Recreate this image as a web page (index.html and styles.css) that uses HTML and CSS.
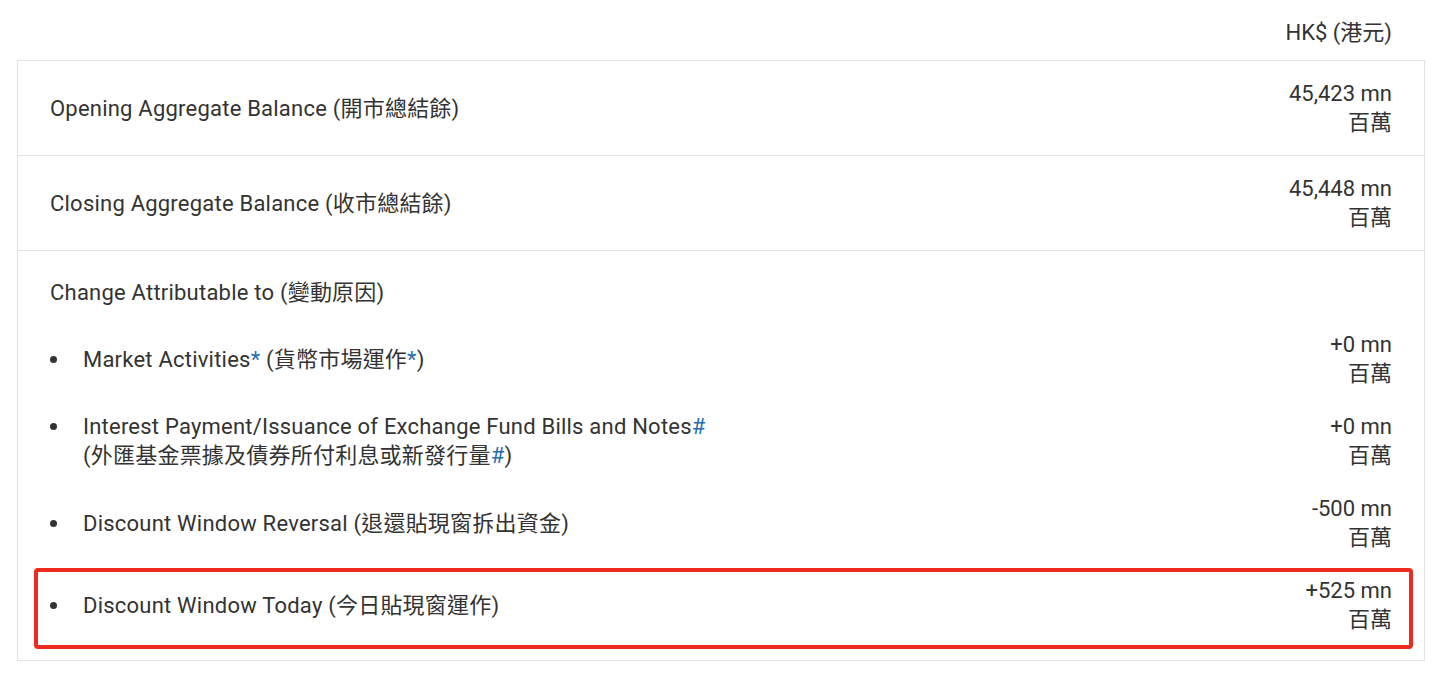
FILE: index.html
```html
<!DOCTYPE html>
<html lang="en">
<head>
<meta charset="utf-8">
<title>Aggregate Balance</title>
<link rel="stylesheet" href="styles.css">
</head>
<body>
<div class="page">
  <div class="unit">HK$ (港元)</div>
  <div class="table">
    <div class="row">
      <div class="label">Opening Aggregate Balance (開市總結餘)</div>
      <div class="value"><span>45,423 mn</span><span>百萬</span></div>
    </div>
    <div class="row">
      <div class="label">Closing Aggregate Balance (收市總結餘)</div>
      <div class="value"><span>45,448 mn</span><span>百萬</span></div>
    </div>
    <div class="row change">
      <div class="heading">Change Attributable to (變動原因)</div>
      <ul class="items">
        <li class="item">
          <div class="item-label">Market Activities<span class="mark">*</span> (貨幣市場運作<span class="mark">*</span>)</div>
          <div class="value"><span>+0 mn</span><span>百萬</span></div>
        </li>
        <li class="item">
          <div class="item-label">Interest Payment/Issuance of Exchange Fund Bills and Notes<span class="mark">#</span><br>(外匯基金票據及債券所付利息或新發行量<span class="mark">#</span>)</div>
          <div class="value"><span>+0 mn</span><span>百萬</span></div>
        </li>
        <li class="item">
          <div class="item-label">Discount Window Reversal (退還貼現窗拆出資金)</div>
          <div class="value"><span>-500 mn</span><span>百萬</span></div>
        </li>
        <li class="item highlight">
          <div class="item-label">Discount Window Today (今日貼現窗運作)</div>
          <div class="value"><span>+525 mn</span><span>百萬</span></div>
        </li>
      </ul>
    </div>
  </div>
</div>
</body>
</html>
```
FILE: styles.css
```css
* { box-sizing: border-box; }
html, body { margin: 0; padding: 0; background: #ffffff; }
body {
  font-family: Roboto, "Noto Sans CJK TC", sans-serif;
  font-size: 22px;
  line-height: 29px;
  color: #333333;
}
.page {
  padding: 0 12px 0 17px;
}
.unit {
  height: 60px;
  padding: 18px 33px 0 0;
  text-align: right;
}
.table {
  border: 1px solid #e2e2e2;
}
.row {
  display: flex;
  align-items: center;
  justify-content: space-between;
  padding: 18px 32px 18px 32px;
  border-top: 1px solid #e2e2e2;
}
.row:first-child { border-top: none; padding-top: 18px; }
.label, .heading, .item-label { letter-spacing: 0.22px; }
.value {
  display: flex;
  flex-direction: column;
  align-items: flex-end;
  text-align: right;
  white-space: nowrap;
}
.row.change {
  display: block;
  padding: 27px 32px 11px 32px;
}
.heading { margin-bottom: 23px; }
.items {
  list-style: none;
  margin: 0;
  padding: 0;
  display: flex;
  flex-direction: column;
  gap: 24px;
}
.item {
  display: flex;
  align-items: center;
  justify-content: space-between;
}
.item-label {
  position: relative;
  padding-left: 33px;
}
.item-label::before {
  content: "";
  position: absolute;
  left: 0;
  top: 11px;
  width: 7px;
  height: 7px;
  border-radius: 50%;
  background: #333333;
}
.highlight {
  margin: -8px -21px 0 -16px;
  padding: 4px 17px 11px 12px;
  border: 4px solid #ee2a1e;
  border-radius: 4px;
}
.mark { color: #1f6db3; }
```
